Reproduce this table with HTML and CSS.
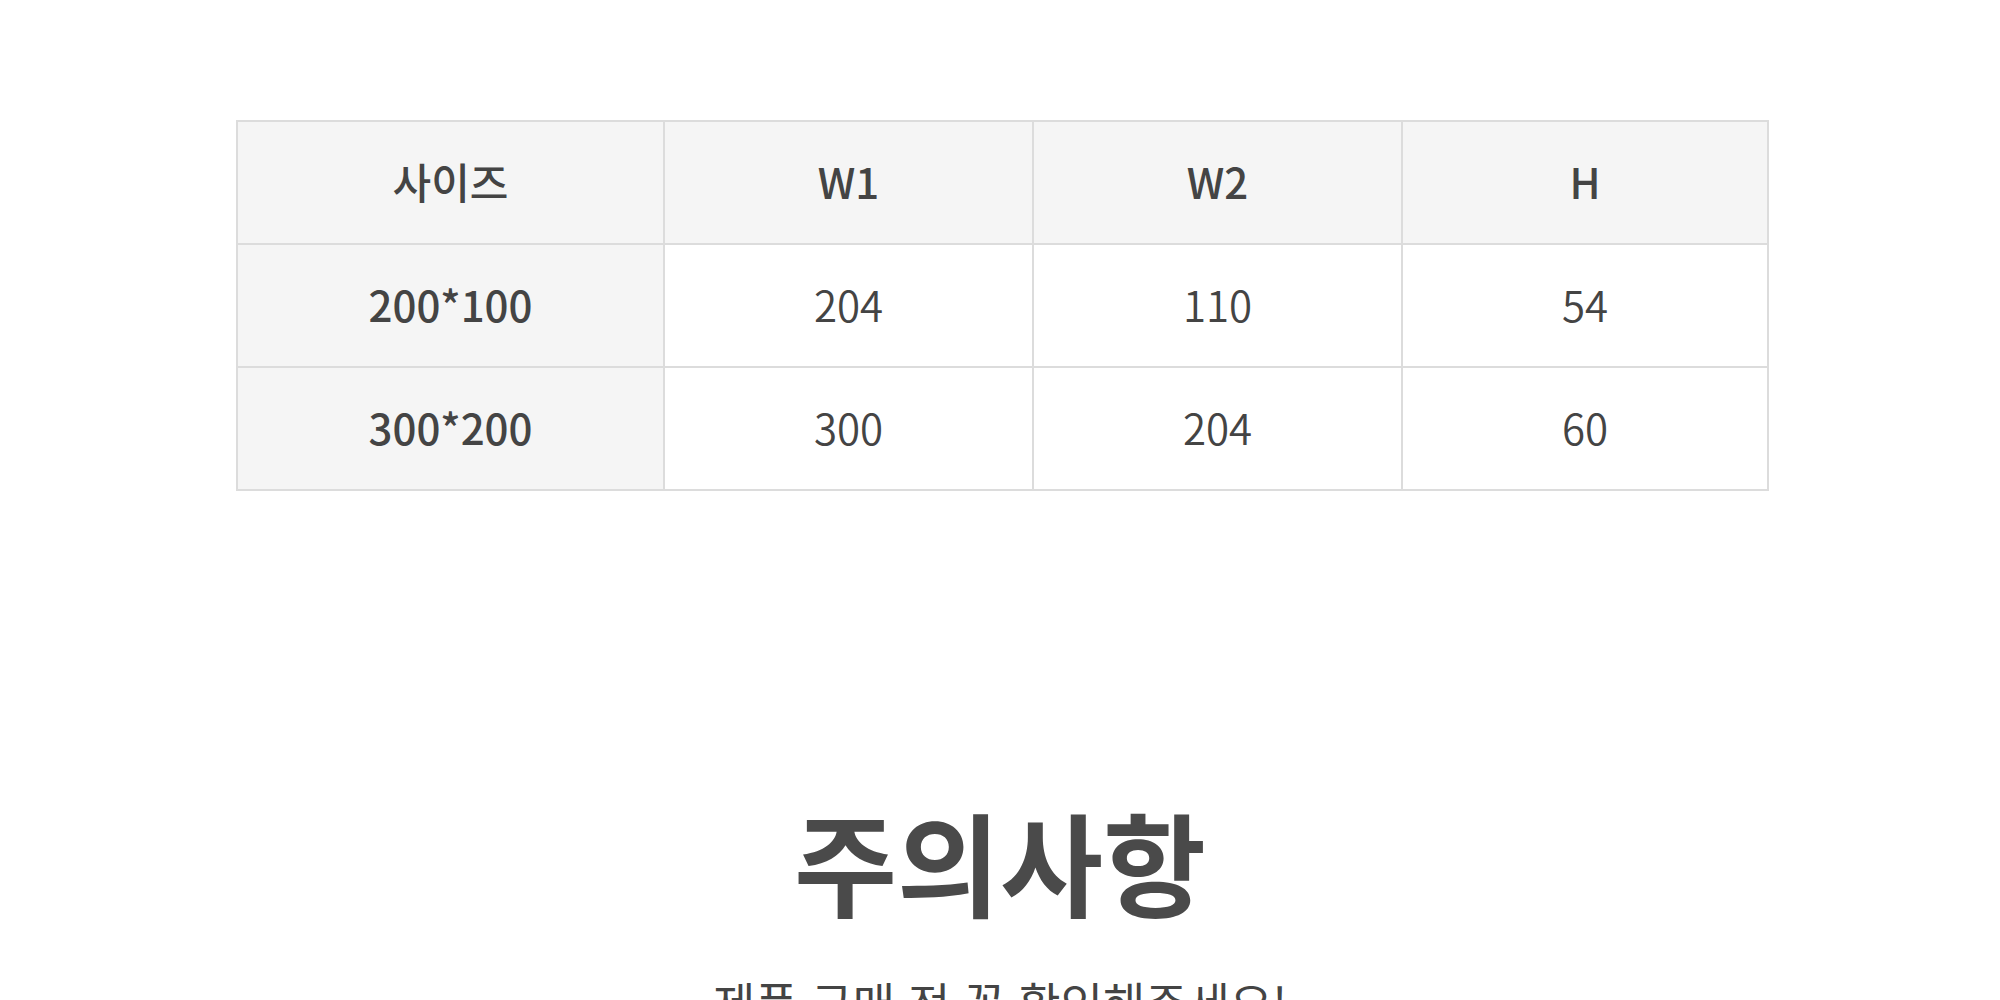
FILE: index.html
```html
<!DOCTYPE html>
<html lang="ko">
<head>
<meta charset="utf-8">
<title>사이즈</title>
<link rel="stylesheet" href="styles.css">
</head>
<body>
<section class="size-section">
  <table class="size-table">
    <colgroup>
      <col class="col-first">
      <col class="col-data">
      <col class="col-data">
      <col class="col-last">
    </colgroup>
    <thead>
      <tr>
        <th>사이즈</th>
        <th>W1</th>
        <th>W2</th>
        <th>H</th>
      </tr>
    </thead>
    <tbody>
      <tr>
        <th class="row-head">200*100</th>
        <td>204</td>
        <td>110</td>
        <td>54</td>
      </tr>
      <tr>
        <th class="row-head">300*200</th>
        <td>300</td>
        <td>204</td>
        <td>60</td>
      </tr>
    </tbody>
  </table>
</section>
<section class="notice">
  <h2 class="notice-title">주의사항</h2>
  <p class="notice-sub">제품 구매 전 꼭 확인해주세요!</p>
</section>
</body>
</html>
```
FILE: styles.css
```css
html, body {
  margin: 0;
  padding: 0;
  background: #ffffff;
}
body {
  font-family: "Noto Sans CJK KR", "Noto Sans", sans-serif;
  color: #444444;
  overflow: hidden;
}
.size-section {
  padding-top: 120px;
  padding-left: 236px;
}
.size-table {
  width: 1533px;
  border-collapse: collapse;
  table-layout: fixed;
  border: 2px solid #dcdcdc;
}
.col-first { width: 427px; }
.col-data { width: 369px; }
.size-table th,
.size-table td {
  height: 117px;
  padding: 0 0 4px;
  border: 2px solid #dcdcdc;
  text-align: center;
  vertical-align: middle;
  font-size: 42px;
  line-height: 1;
  color: #444444;
}
.size-table thead th {
  background: #f5f5f5;
  font-weight: 500;
}
.size-table .row-head {
  background: #f5f5f5;
  font-weight: 500;
}
.size-table td {
  font-weight: 350;
  background: #ffffff;
}
.notice {
  text-align: center;
  padding-top: 302px;
}
.notice-title {
  margin: 0;
  font-size: 112px;
  font-weight: 700;
  line-height: 1.2;
  color: #4a4a4a;
}
.notice-sub {
  margin: 47px 0 0;
  font-size: 46px;
  font-weight: 400;
  line-height: 1.2;
  color: #444444;
}
```
